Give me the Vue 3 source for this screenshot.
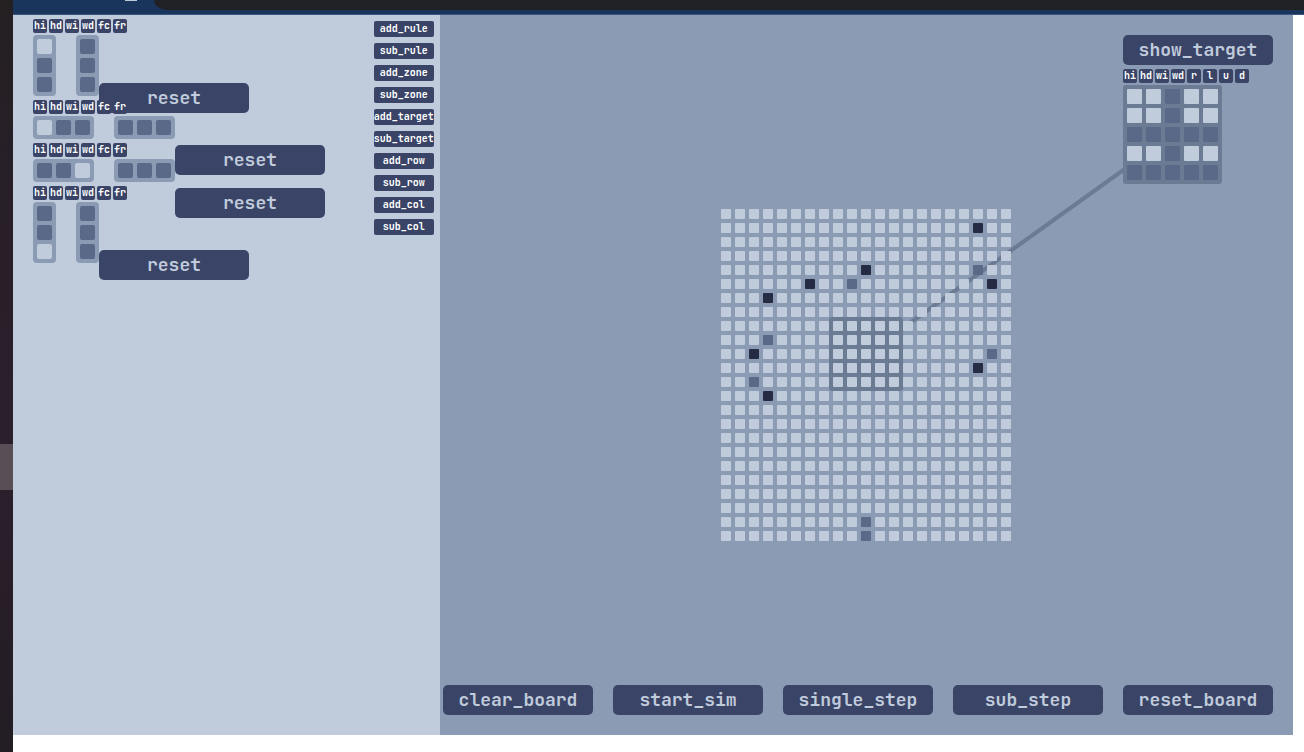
<script setup>
import { ref, onMounted, onBeforeUnmount } from 'vue'

const COLS = 21
const ROWS = 24

const ruleKeys = ['hi', 'hd', 'wi', 'wd', 'fc', 'fr']
const targetKeys = ['hi', 'hd', 'wi', 'wd', 'r', 'l', 'u', 'd']

const rules = [
  { vertical: true, find: [0, 1, 1], replace: [1, 1, 1] },
  { vertical: false, find: [0, 1, 1], replace: [1, 1, 1] },
  { vertical: false, find: [1, 1, 0], replace: [1, 1, 1] },
  { vertical: true, find: [1, 1, 0], replace: [1, 1, 1] }
]

const sideActions = [
  'add_rule', 'sub_rule', 'add_zone', 'sub_zone', 'add_target',
  'sub_target', 'add_row', 'sub_row', 'add_col', 'sub_col'
]
const boardActions = ['clear_board', 'start_sim', 'single_step', 'sub_step', 'reset_board']

const targetCells = [
  0, 0, 1, 0, 0,
  0, 0, 1, 0, 0,
  1, 1, 1, 1, 1,
  0, 0, 1, 0, 0,
  1, 1, 1, 1, 1
]

const states = {
  '18,1': 'dark', '10,4': 'dark', '6,5': 'dark', '19,5': 'dark', '3,6': 'dark',
  '2,10': 'dark', '18,11': 'dark', '3,13': 'dark',
  '18,4': 'mid', '9,5': 'mid', '3,9': 'mid', '19,10': 'mid', '2,12': 'mid',
  '10,22': 'mid', '10,23': 'mid'
}
const boardCells = Array.from({ length: COLS * ROWS }, (_, i) =>
  states[`${i % COLS},${Math.floor(i / COLS)}`] || 'light')

const stage = ref(null)
const zone = ref(null)
const target = ref(null)
const link = ref({ x1: 0, y1: 0, x2: 0, y2: 0 })
let observer

function centre(el, origin) {
  const r = el.getBoundingClientRect()
  return [r.left + r.width / 2 - origin.left, r.top + r.height / 2 - origin.top]
}
function connect() {
  const origin = stage.value.getBoundingClientRect()
  const [x1, y1] = centre(zone.value, origin)
  const [x2, y2] = centre(target.value, origin)
  link.value = { x1, y1, x2, y2 }
}

onMounted(() => {
  connect()
  observer = new ResizeObserver(connect)
  observer.observe(stage.value)
})
onBeforeUnmount(() => observer.disconnect())
</script>

<template>
  <div class="desktop">
    <div class="dock"><div class="dock-item"></div></div>
    <div class="window">
      <header class="titlebar">
        <span class="mark"></span>
        <div class="tab"></div>
      </header>
      <main class="app">
        <aside class="sidebar">
          <div class="rules">
            <section v-for="(rule, r) in rules" :key="r" class="rule">
              <div class="keys">
                <button v-for="k in ruleKeys" :key="k" type="button" class="key">{{ k }}</button>
              </div>
              <div class="rule-body">
                <div class="pattern" :class="{ vertical: rule.vertical }">
                  <span v-for="(c, i) in rule.find" :key="i" class="cell" :class="c ? 'mid' : 'light'"></span>
                </div>
                <div class="pattern" :class="{ vertical: rule.vertical }">
                  <span v-for="(c, i) in rule.replace" :key="i" class="cell" :class="c ? 'mid' : 'light'"></span>
                </div>
                <button type="button" class="big reset">reset</button>
              </div>
            </section>
          </div>
          <nav class="side-actions">
            <button v-for="a in sideActions" :key="a" type="button" class="small">{{ a }}</button>
          </nav>
        </aside>

        <section ref="stage" class="stage">
          <div class="board">
            <div ref="zone" class="zone"></div>
          </div>
          <svg class="link">
            <line :x1="link.x1" :y1="link.y1" :x2="link.x2" :y2="link.y2" stroke="#6c7b94" stroke-width="4" />
          </svg>
          <div class="board">
            <span v-for="(s, i) in boardCells" :key="i" class="dot" :class="s"></span>
          </div>
          <div class="target">
            <button type="button" class="big">show_target</button>
            <div class="keys">
              <button v-for="k in targetKeys" :key="k" type="button" class="key">{{ k }}</button>
            </div>
            <div ref="target" class="target-grid">
              <span v-for="(c, i) in targetCells" :key="i" class="cell square" :class="c ? 'mid' : 'light'"></span>
            </div>
          </div>
          <div class="controls">
            <button v-for="a in boardActions" :key="a" type="button" class="big">{{ a }}</button>
          </div>
        </section>
      </main>
    </div>
  </div>
</template>

<style>
body {
  background: #ffffff;
}
</style>

<style scoped>
.desktop {
  display: flex;
  min-height: 100vh;
  font-family: "JetBrains Mono", "DejaVu Sans Mono", monospace;
  font-weight: 700;
}
.dock {
  flex: none;
  width: 13px;
  padding-top: 444px;
  box-sizing: border-box;
  background: linear-gradient(#242022, #271f27 20%, #2b1f2c 60%, #231d24);
}
.dock-item {
  height: 46px;
  background: #584f56;
}
.window {
  flex: 1;
  min-width: 0;
  display: flex;
  flex-direction: column;
}
.titlebar {
  display: flex;
  align-items: flex-start;
  height: 14px;
  padding-left: 112px;
  background: #19355c;
  border-bottom: 1px solid #3a5680;
}
.mark {
  width: 12px;
  height: 1px;
  margin-right: 17px;
  background: #c0cbdc;
}
.tab {
  flex: 1;
  height: 10px;
  background: #202124;
  border-bottom-left-radius: 14px 10px;
}
.app {
  flex: 1;
  display: grid;
  grid-template-columns: minmax(0, 1fr) minmax(0, 2fr);
  margin: 0 11px 17px 0;
}
.sidebar {
  display: flex;
  justify-content: space-between;
  align-items: flex-start;
  padding: 4px 6px 0 20px;
  background: #c0cbdc;
}
.stage {
  position: relative;
  display: grid;
  background: #8b9bb4;
}
.rules {
  display: flex;
  flex-direction: column;
  align-items: flex-start;
  gap: 4px;
}
.rule {
  position: relative;
}
.keys {
  display: flex;
  gap: 2px;
  margin-bottom: 2px;
}
button {
  display: flex;
  align-items: center;
  justify-content: center;
  margin: 0;
  padding: 0;
  border: 0;
  font: inherit;
  white-space: nowrap;
  background: #3a4466;
  cursor: pointer;
}
.key {
  width: 14px;
  height: 14px;
  border-radius: 2px;
  font-size: 10px;
  line-height: 14px;
  color: #ffffff;
}
.small {
  width: 60px;
  height: 16px;
  border-radius: 2px;
  font-size: 10px;
  line-height: 16px;
  color: #ffffff;
}
.big {
  width: 150px;
  height: 30px;
  border-radius: 5px;
  font-size: 18px;
  line-height: 30px;
  color: #c0cbdc;
}
.rule-body {
  position: relative;
  display: flex;
  gap: 20px;
  width: max-content;
}
.reset {
  position: absolute;
  left: 100%;
  top: 50%;
  margin-top: 17px;
}
.pattern {
  display: flex;
  gap: 4px;
  padding: 4px;
  border-radius: 4px;
  background: #8b9bb4;
}
.pattern.vertical {
  flex-direction: column;
}
.cell {
  width: 15px;
  height: 15px;
  border-radius: 2px;
}
.cell.square {
  border-radius: 1px;
}
.light {
  background: #c0cbdc;
}
.mid {
  background: #5a6988;
}
.dark {
  background: #262b44;
}
.side-actions {
  display: flex;
  flex-direction: column;
  gap: 6px;
  padding-top: 2px;
}
.board,
.target,
.controls {
  grid-area: 1 / 1;
  position: relative;
}
.board {
  place-self: center;
  display: grid;
  grid-template-columns: repeat(21, 10px);
  grid-template-rows: repeat(24, 10px);
  gap: 4px;
}
.dot {
  border-radius: 1px;
}
.zone {
  grid-column: 9 / span 5;
  grid-row: 9 / span 5;
  margin: -4px;
  border-radius: 3px;
  background: #6c7b94;
}
.link {
  position: absolute;
  inset: 0;
  width: 100%;
  height: 100%;
}
.target {
  place-self: start end;
  margin: 20px 20px 0 0;
}
.target .big {
  margin-bottom: 4px;
}
.target-grid {
  display: grid;
  grid-template-columns: repeat(5, 15px);
  gap: 4px;
  width: max-content;
  padding: 4px;
  border-radius: 3px;
  background: #6c7b94;
}
.controls {
  place-self: end;
  display: flex;
  gap: 20px;
  margin: 0 20px 20px 0;
}
</style>
